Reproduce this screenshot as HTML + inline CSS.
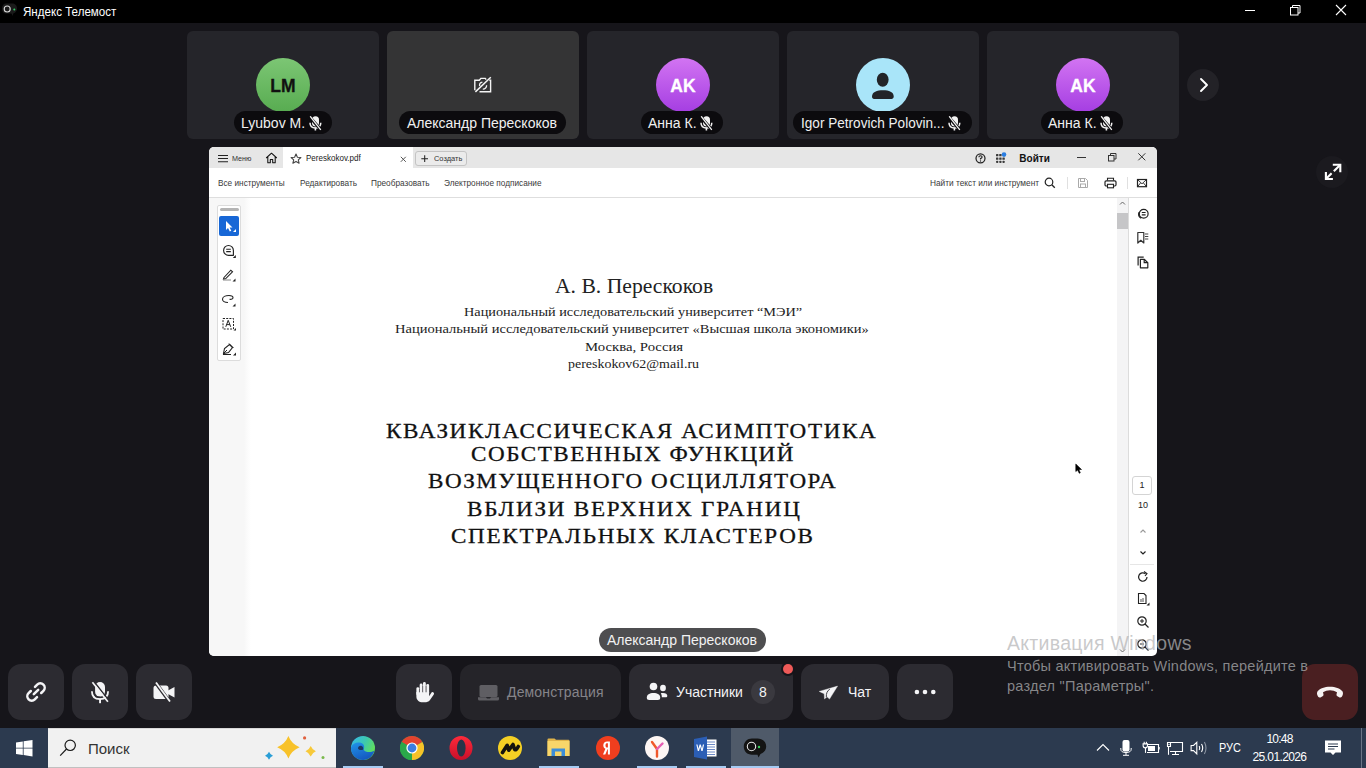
<!DOCTYPE html>
<html><head><meta charset="utf-8">
<style>
*{margin:0;padding:0;box-sizing:border-box}
html,body{width:1366px;height:768px;overflow:hidden;background:#16151a;font-family:"Liberation Sans",sans-serif;position:relative}
.a{position:absolute}
.t{position:absolute;white-space:nowrap;line-height:1}
/* title bar */
#tb{left:0;top:0;width:1366px;height:23px;background:#000}
/* tiles */
.tile{position:absolute;top:31px;width:192px;height:108px;background:#25252a;border-radius:6px}
.av{position:absolute;left:69px;top:26.5px;width:54px;height:54px;border-radius:50%;color:#fff;font-weight:bold;font-size:17.5px;text-align:center;line-height:56.5px;-webkit-text-stroke:0.3px currentColor}
.pill{position:absolute;top:80px;height:23px;border-radius:12px;background:#0c0b0e;color:#f0f0f0;font-size:14px;line-height:25px;white-space:nowrap}
.btn{position:absolute;top:664px;height:56px;background:#2c2b31;border-radius:13px}
.btxt{position:absolute;top:0;line-height:56px;font-size:15px;color:#f0f0f2;white-space:nowrap}
#tbar{left:0;top:728px;width:1366px;height:40px;background:#2c3a4f}
.ul{position:absolute;top:38px;height:2px;background:#a6cbf3}
</style></head><body>

<div id="tb" class="a">
  <svg class="a" style="left:0;top:0" width="22" height="22"><path d="M6 3.5H12C15 3.5 17 5.5 17 8.5C17 11 15.5 12.7 13.5 13.3L12.5 16L11.5 13.5H6C3.5 13.5 2 11.5 2 8.5C2 5.5 3.5 3.5 6 3.5Z" fill="#1a1a1a"/><circle cx="7.2" cy="9" r="3" fill="none" stroke="#d8d8d8" stroke-width="1.1"/><circle cx="14.3" cy="9.5" r="1" fill="#3c6"/></svg>
  <div class="t" style="left:23px;top:6px;font-size:12px;color:#fff;transform:scaleX(0.965);transform-origin:left">Яндекс Телемост</div>
  <div class="a" style="left:1245px;top:10px;width:10px;height:1px;background:#fff"></div>
  <svg class="a" style="left:1288px;top:3px" width="14" height="14"><rect x="2.5" y="4.5" width="7.5" height="7.5" fill="none" stroke="#fff"/><path d="M4.5 4.5V2.5H12V10H10" fill="none" stroke="#fff"/></svg>
  <svg class="a" style="left:1334px;top:3px" width="14" height="14"><path d="M2 2L12 12M12 2L2 12" stroke="#fff" stroke-width="1.1"/></svg>
</div>

<!-- tiles -->
<div class="tile" style="left:187px">
  <div class="av" style="background:linear-gradient(#7cc674,#58ac51);color:#111">LM</div>
  <div class="pill" style="left:47px;width:98px;padding-left:7px">Lyubov M.<svg class="a" style="left:75px;top:5px" width="13" height="15" viewBox="0 0 13 15"><rect x="3" y="0.3" width="7" height="10.2" rx="3.5" fill="#f2f2f2"/><path d="M1 6.8Q1 12 6.4 12Q11.8 12 11.8 6.8" fill="none" stroke="#f2f2f2" stroke-width="1.5"/><rect x="5.6" y="11.5" width="1.6" height="3" fill="#f2f2f2"/><path d="M0.6 0.8L12 14" stroke="#0c0b0e" stroke-width="3"/><path d="M1.2 0.3L11.8 13.8" stroke="#f2f2f2" stroke-width="1.3"/></svg></div>
</div>
<div class="tile" style="left:387px;background:#343435">
  <svg class="a" style="left:86px;top:45px" width="20" height="18" viewBox="0 0 20 18"><path d="M6.5 15.8H17.6V4.3H16.3M1.8 14.2V4.3H6.3L7.9 2.4H12.3L13.2 3.6" fill="none" stroke="#f4f4f4" stroke-width="1.4"/><path d="M6.6 10.2A3.5 3.5 0 0 1 9.4 6.2M13.6 9.2A3.6 3.6 0 0 1 9.8 13.1" fill="none" stroke="#f4f4f4" stroke-width="1.3"/><path d="M2.4 15.9L17.8 1.2" stroke="#f4f4f4" stroke-width="1.5"/></svg>
  <div class="pill" style="left:12px;width:167px;padding-left:8px">Александр Перескоков</div>
</div>
<div class="tile" style="left:587px">
  <div class="av" style="background:linear-gradient(#d274f2,#a53ee2)">AK</div>
  <div class="pill" style="left:54px;width:82px;padding-left:7px">Анна К.<svg class="a" style="left:59px;top:5px" width="13" height="15" viewBox="0 0 13 15"><rect x="3" y="0.3" width="7" height="10.2" rx="3.5" fill="#f2f2f2"/><path d="M1 6.8Q1 12 6.4 12Q11.8 12 11.8 6.8" fill="none" stroke="#f2f2f2" stroke-width="1.5"/><rect x="5.6" y="11.5" width="1.6" height="3" fill="#f2f2f2"/><path d="M0.6 0.8L12 14" stroke="#0c0b0e" stroke-width="3"/><path d="M1.2 0.3L11.8 13.8" stroke="#f2f2f2" stroke-width="1.3"/></svg></div>
</div>
<div class="tile" style="left:787px">
  <div class="av" style="background:#a9e5f9"><svg class="a" style="left:0;top:0" width="54" height="54"><ellipse cx="26.7" cy="21.8" rx="5.9" ry="7" fill="#222428"/><path d="M16 38.5C16 34 21 32.3 27 32.3S37.7 34 37.7 38.5C37.7 40.6 36.5 41 34 41H19.5C17 41 16 40.6 16 38.5Z" fill="#222428"/></svg></div>
  <div class="pill" style="left:6px;width:179px;padding-left:8px"><span style="display:inline-block;transform:scaleX(0.97);transform-origin:left">Igor Petrovich Polovin...</span><svg class="a" style="left:155px;top:5px" width="13" height="15" viewBox="0 0 13 15"><rect x="3" y="0.3" width="7" height="10.2" rx="3.5" fill="#f2f2f2"/><path d="M1 6.8Q1 12 6.4 12Q11.8 12 11.8 6.8" fill="none" stroke="#f2f2f2" stroke-width="1.5"/><rect x="5.6" y="11.5" width="1.6" height="3" fill="#f2f2f2"/><path d="M0.6 0.8L12 14" stroke="#0c0b0e" stroke-width="3"/><path d="M1.2 0.3L11.8 13.8" stroke="#f2f2f2" stroke-width="1.3"/></svg></div>
</div>
<div class="tile" style="left:987px">
  <div class="av" style="background:linear-gradient(#d274f2,#a53ee2)">AK</div>
  <div class="pill" style="left:54px;width:82px;padding-left:7px">Анна К.<svg class="a" style="left:59px;top:5px" width="13" height="15" viewBox="0 0 13 15"><rect x="3" y="0.3" width="7" height="10.2" rx="3.5" fill="#f2f2f2"/><path d="M1 6.8Q1 12 6.4 12Q11.8 12 11.8 6.8" fill="none" stroke="#f2f2f2" stroke-width="1.5"/><rect x="5.6" y="11.5" width="1.6" height="3" fill="#f2f2f2"/><path d="M0.6 0.8L12 14" stroke="#0c0b0e" stroke-width="3"/><path d="M1.2 0.3L11.8 13.8" stroke="#f2f2f2" stroke-width="1.3"/></svg></div>
</div>
<div class="a" style="left:1187px;top:69px;width:32px;height:32px;border-radius:50%;background:#232227"><svg class="a" style="left:0;top:0" width="32" height="32"><path d="M14 10L20 16L14 22" fill="none" stroke="#fff" stroke-width="1.9" stroke-linecap="round" stroke-linejoin="round"/></svg></div>

<div class="a" style="left:1316px;top:156px;width:32px;height:32px;border-radius:50%;background:#1b1a1f"></div>
<svg class="a" style="left:1316px;top:156px" width="32" height="32"><path d="M16.8 8.7H24.3V16.2" fill="none" stroke="#fff" stroke-width="2.1"/><path d="M23.8 9.2L17.8 15.2" stroke="#fff" stroke-width="2.1"/><path d="M16.9 23H9.9V16" fill="none" stroke="#fff" stroke-width="2.1"/><path d="M10.4 22.5L15.6 17.3" stroke="#fff" stroke-width="2.1"/></svg>
<!-- PDF window -->
<div class="a" id="pdf" style="left:209px;top:147px;width:948px;height:509px;background:#fff;border-radius:5px;overflow:hidden">
  <div class="a" style="left:0;top:0;width:948px;height:21px;background:#e6e6e6"></div>
  <div class="a" style="left:74px;top:0;width:130px;height:21px;background:#fff"></div>
  <div class="a" style="left:0;top:50px;width:948px;height:1px;background:#dedede"></div>
  <div class="a" style="left:0;top:51px;width:42px;height:458px;background:linear-gradient(90deg,#f7f7f7 0,#f7f7f7 35px,#fbfbfb 38px,#fff 42px)"></div>
  <div class="a" style="left:8px;top:58px;width:24px;height:156px;background:#fff;border:1px solid #dcdcdc;border-radius:2px"></div>
  <div class="a" style="left:11px;top:61px;width:19px;height:3px;background:#b4b4b4;border-radius:2px"></div>
  <div class="a" style="left:10px;top:69px;width:20px;height:20px;background:#1767d6;border-radius:2px"></div>
  <div class="a" style="left:908px;top:51px;width:11px;height:458px;background:#f4f4f5"></div>
  <div class="a" style="left:908px;top:66px;width:11px;height:16px;background:#c6c6c8"></div>
  <div class="a" style="left:919px;top:51px;width:1px;height:458px;background:#dcdcdc"></div>
</div>
<!-- tab bar -->
<svg class="a" style="left:217px;top:154px" width="12" height="9"><path d="M1 1.5H11M1 4.5H11M1 7.8H11" stroke="#222" stroke-width="1.1"/></svg>
<div class="t" style="left:232px;top:154.6px;font-size:8px;color:#333;transform:scaleX(0.9);transform-origin:left">Меню</div>
<svg class="a" style="left:265px;top:152px" width="13" height="12"><path d="M1.2 6L6.5 1.2L11.8 6M2.8 4.8V10.8H5.3V7.5H7.7V10.8H10.2V4.8" fill="none" stroke="#111" stroke-width="1.05" stroke-linejoin="round"/></svg>
<svg class="a" style="left:290px;top:153px" width="12" height="11"><path d="M6 1L7.4 4.2L10.9 4.5L8.3 6.8L9.1 10.2L6 8.4L2.9 10.2L3.7 6.8L1.1 4.5L4.6 4.2Z" fill="none" stroke="#444" stroke-width="1.1" stroke-linejoin="round"/></svg>
<div class="t" style="left:306px;top:155.3px;font-size:8.2px;color:#222;transform:scaleX(0.98);transform-origin:left">Pereskokov.pdf</div>
<svg class="a" style="left:400px;top:156px" width="7" height="7"><path d="M0.8 0.8L5.8 5.8M5.8 0.8L0.8 5.8" stroke="#555" stroke-width="1"/></svg>
<div class="a" style="left:415px;top:151px;width:52px;height:15px;border:1px solid #c4c4c4;border-radius:3px;background:#ebebeb"></div>
<svg class="a" style="left:420.5px;top:155px" width="8" height="8"><path d="M3.7 0.3V7M0.3 3.7H7" stroke="#222" stroke-width="1.05"/></svg>
<div class="t" style="left:434px;top:155.2px;font-size:8px;color:#333;transform:scaleX(0.93);transform-origin:left">Создать</div>
<svg class="a" style="left:975px;top:153px" width="11" height="11"><circle cx="5.5" cy="5.3" r="4.5" fill="none" stroke="#222" stroke-width="1.25"/><path d="M3.9 4.2Q3.9 2.7 5.5 2.7Q7.1 2.7 7.1 4.1Q7.1 5.1 5.5 5.6V6.5" fill="none" stroke="#222" stroke-width="1.15"/><circle cx="5.5" cy="8" r="0.7" fill="#222"/></svg>
<svg class="a" style="left:995px;top:152px" width="12" height="12"><g fill="#3a3a3a"><rect x="1" y="2" width="2.4" height="2.2" rx="0.5"/><rect x="4.2" y="2" width="2.4" height="2.2" rx="0.5"/><rect x="1" y="5.4" width="2.4" height="2.4" rx="0.5"/><rect x="4.2" y="5.4" width="2.4" height="2.4" rx="0.5"/><rect x="7.4" y="5.4" width="2.4" height="2.4" rx="0.5"/><rect x="1" y="8.7" width="2.4" height="2.4" rx="1"/><rect x="4.2" y="8.7" width="2.4" height="2.4" rx="1"/><rect x="7.4" y="8.7" width="2.4" height="2.4" rx="1"/></g><circle cx="9" cy="2.6" r="2.3" fill="#2a7de1"/></svg>
<div class="t" style="left:1019.3px;top:153.5px;font-size:10px;font-weight:bold;color:#111">Войти</div>
<div class="a" style="left:1077px;top:157px;width:9px;height:1px;background:#333"></div>
<svg class="a" style="left:1107px;top:152px" width="11" height="10"><rect x="1.5" y="3.5" width="5.5" height="5.5" fill="none" stroke="#333"/><path d="M3.5 3.5V1.5H9V7H7" fill="none" stroke="#333"/></svg>
<svg class="a" style="left:1137px;top:152px" width="10" height="10"><path d="M1.3 1.3L8.3 8.3M8.3 1.3L1.3 8.3" stroke="#333" stroke-width="1"/></svg>
<!-- toolbar -->
<div class="t" style="left:218px;top:178.8px;font-size:8.5px;color:#3a3a3a;transform:scaleX(0.97);transform-origin:left">Все инструменты</div>
<div class="t" style="left:300px;top:178.8px;font-size:8.5px;color:#3a3a3a;transform:scaleX(0.97);transform-origin:left">Редактировать</div>
<div class="t" style="left:371px;top:178.8px;font-size:8.5px;color:#3a3a3a;transform:scaleX(0.97);transform-origin:left">Преобразовать</div>
<div class="t" style="left:444px;top:178.8px;font-size:8.5px;color:#3a3a3a;transform:scaleX(0.97);transform-origin:left">Электронное подписание</div>
<div class="t" style="left:930px;top:178.8px;font-size:8.5px;color:#3a3a3a;transform:scaleX(0.975);transform-origin:left">Найти текст или инструмент</div>
<svg class="a" style="left:1044px;top:177px" width="12" height="12"><circle cx="5" cy="5" r="3.8" fill="none" stroke="#222" stroke-width="1.2"/><path d="M7.8 7.8L10.8 10.8" stroke="#222" stroke-width="1.3"/></svg>
<div class="a" style="left:1067px;top:177px;width:1px;height:12px;background:#e0e0e0"></div>
<svg class="a" style="left:1077px;top:177px" width="12" height="12"><path d="M1.5 1.5H8.5L10.5 3.5V10.5H1.5Z" fill="none" stroke="#aaa" stroke-width="1"/><rect x="3.5" y="1.5" width="4" height="3" fill="none" stroke="#aaa"/><rect x="3.5" y="7" width="5" height="3.5" fill="none" stroke="#aaa"/></svg>
<svg class="a" style="left:1104px;top:177px" width="13" height="12"><path d="M3.5 3.5V1.3H9.5V3.5" fill="none" stroke="#222" stroke-width="1.1"/><rect x="1" y="3.8" width="11" height="5.2" rx="1.2" fill="none" stroke="#222" stroke-width="1.2"/><rect x="3.5" y="7.3" width="6" height="3.5" fill="#fff" stroke="#222" stroke-width="1.1"/></svg>
<div class="a" style="left:1127px;top:177px;width:1px;height:12px;background:#e0e0e0"></div>
<svg class="a" style="left:1136px;top:178px" width="12" height="10"><rect x="1.5" y="1.5" width="9" height="7.2" fill="none" stroke="#222" stroke-width="1.2"/><path d="M1.5 1.5L6 5.8L10.5 1.5M1.5 8.7L4.5 5M10.5 8.7L7.5 5" fill="none" stroke="#222" stroke-width="0.9"/></svg>
<!-- left tools -->
<svg class="a" style="left:223px;top:219px" width="14" height="16"><path d="M3 2V11L5 9L6.8 12.5L8.3 11.8L6.6 8.4H9.5Z" fill="#fff"/><path d="M10 13L13 13L13 10Z" fill="#fff"/></svg>
<svg class="a" style="left:221px;top:243px" width="16" height="16"><path d="M7.5 12.3A4.9 4.9 0 1 1 12.4 7.4V12.3Z" fill="none" stroke="#222" stroke-width="1.15" stroke-linejoin="round"/><path d="M5.2 6.3H9.8M5.2 8.6H9.8" stroke="#222" stroke-width="1.05"/><path d="M11.8 15H14.8V12Z" fill="#222"/></svg>
<svg class="a" style="left:221px;top:267px" width="16" height="16"><path d="M3 10.5L9.8 3.2L11.5 4.8L4.5 11.8L2.5 12.3Z" fill="none" stroke="#222" stroke-width="1.1"/><path d="M2 13H10" stroke="#999" stroke-width="1.2"/><path d="M11.5 14.5H14.5V11.5Z" fill="#222"/></svg>
<svg class="a" style="left:221px;top:292px" width="16" height="16"><path d="M7 10.5C3.5 10.5 1.5 9 1.5 7.2C1.5 5 4.5 3.5 8 3.5C10.5 3.5 12 4.5 12 5.8C12 7 10.5 7.5 8.5 7.3" fill="none" stroke="#222" stroke-width="1.1"/><path d="M11.5 14.5H14.5V11.5Z" fill="#222"/></svg>
<svg class="a" style="left:221px;top:316px" width="16" height="16"><rect x="2" y="2.5" width="10.5" height="10.5" fill="none" stroke="#222" stroke-width="1" stroke-dasharray="2 1.2"/><path d="M4.8 10.8L7.2 4.3L9.7 10.8M5.6 8.6H8.9" fill="none" stroke="#222" stroke-width="1"/><path d="M12.5 14.5H15V12Z" fill="#222"/></svg>
<svg class="a" style="left:221px;top:341px" width="16" height="16"><path d="M2.5 12.5L3.5 7.5L8.5 3.5L11.5 6.5L7.5 11.5Z" fill="none" stroke="#222" stroke-width="1.1"/><path d="M8 2.5L12.5 7M2.5 12.5L6 9" fill="none" stroke="#222" stroke-width="1"/><path d="M2 13.5H10" stroke="#222" stroke-width="1"/><path d="M12 14.5H15V11.5Z" fill="#222"/></svg>
<!-- scrollbar & right panel -->
<svg class="a" style="left:1117px;top:199px" width="11" height="8"><path d="M3 5.5L5.5 3L8 5.5" fill="none" stroke="#666" stroke-width="1"/></svg>
<svg class="a" style="left:1117px;top:647px" width="11" height="8"><path d="M3 2.5L5.5 5L8 2.5" fill="none" stroke="#666" stroke-width="1"/></svg>
<svg class="a" style="left:1136px;top:206px" width="14" height="14"><circle cx="7.7" cy="7.8" r="4.4" fill="#fff" stroke="#222" stroke-width="1.2"/><path d="M5.8 6.5H9.6M5.8 8.9H9.6" stroke="#222" stroke-width="1.1"/><path d="M3 6.2A5 5 0 0 0 5.2 12.3" fill="none" stroke="#222" stroke-width="1.2"/></svg>
<svg class="a" style="left:1136px;top:230px" width="14" height="14"><path d="M1.8 2.5H7.8V13L4.8 10.3L1.8 13Z" fill="none" stroke="#333" stroke-width="1.2" stroke-linejoin="round"/><path d="M9 4H12.3M9 6.5H12.3M9 9H12.3" stroke="#444" stroke-width="1.1"/></svg>
<svg class="a" style="left:1136px;top:255px" width="14" height="14"><path d="M2.1 10.6V2.2H7.7" fill="none" stroke="#222" stroke-width="1.2"/><path d="M4.4 4.3H8.2L11.8 7.8V12.8H4.4Z" fill="#fff" stroke="#222" stroke-width="1.2" stroke-linejoin="round"/><path d="M8.2 4.3V7.6H11.6" fill="none" stroke="#222" stroke-width="1.2"/></svg>
<div class="a" style="left:1132px;top:476px;width:20px;height:19px;border:1px solid #d4d4d4;border-radius:3px;background:#fff"></div>
<div class="t" style="left:1132px;top:481px;width:20px;text-align:center;font-size:9px;color:#222">1</div>
<div class="t" style="left:1133px;top:501px;width:20px;text-align:center;font-size:9px;color:#222">10</div>
<svg class="a" style="left:1137px;top:527px" width="12" height="8"><path d="M3.5 5.5L6 3L8.5 5.5" fill="none" stroke="#999" stroke-width="1.1"/></svg>
<svg class="a" style="left:1137px;top:549px" width="12" height="8"><path d="M3.5 2.5L6 5L8.5 2.5" fill="none" stroke="#222" stroke-width="1.2"/></svg>
<div class="a" style="left:1130px;top:564px;width:24px;height:1px;background:#e6e6e6"></div>
<svg class="a" style="left:1136px;top:570px" width="14" height="14"><path d="M11 7A4.2 4.2 0 1 1 9.5 3.8" fill="none" stroke="#222" stroke-width="1.2"/><path d="M8 1.5L11 3.5L9 6" fill="none" stroke="#222" stroke-width="1.1"/></svg>
<svg class="a" style="left:1136px;top:592px" width="14" height="14"><path d="M2.5 1.5H8L10 3.5V11.5H2.5Z" fill="none" stroke="#222" stroke-width="1.1"/><path d="M5 7V10M7 6V10" stroke="#222" stroke-width="0.8"/><path d="M10.5 13.5H13.5V10.5Z" fill="#222"/></svg>
<svg class="a" style="left:1136px;top:615px" width="14" height="14"><circle cx="6" cy="6" r="4.2" fill="none" stroke="#222" stroke-width="1.2"/><path d="M4 6H8M6 4V8" stroke="#222"/><path d="M9 9L12.5 12.5" stroke="#222" stroke-width="1.3"/></svg>
<svg class="a" style="left:1136px;top:638px" width="14" height="14"><circle cx="6" cy="6" r="4.2" fill="none" stroke="#222" stroke-width="1.2"/><path d="M4 6H8" stroke="#222"/><path d="M9 9L12.5 12.5" stroke="#222" stroke-width="1.3"/></svg>
<!-- document -->
<div class="t" style="left:554.5px;top:276px;font-size:21px;font-family:'Liberation Serif',serif;color:#222;transform:scaleX(1.03);transform-origin:left">А. В. Перескоков</div>
<div class="t" style="left:464px;top:304.9px;font-size:13px;font-family:'Liberation Serif',serif;color:#222;transform:scaleX(1.098);transform-origin:left">Национальный исследовательский университет “МЭИ”</div>
<div class="t" style="left:395.3px;top:322.1px;font-size:13px;font-family:'Liberation Serif',serif;color:#222;transform:scaleX(1.115);transform-origin:left">Национальный исследовательский университет «Высшая школа экономики»</div>
<div class="t" style="left:584.5px;top:340px;font-size:13px;font-family:'Liberation Serif',serif;color:#222;transform:scaleX(1.133);transform-origin:left">Москва, Россия</div>
<div class="t" style="left:567.7px;top:357.1px;font-size:13px;font-family:'Liberation Serif',serif;color:#222;transform:scaleX(1.073);transform-origin:left">pereskokov62@mail.ru</div>
<div class="t" style="left:386.4px;top:420.6px;font-size:21px;font-family:'Liberation Serif',serif;color:#111;letter-spacing:1.49px;-webkit-text-stroke:0.3px #111;transform:scaleX(1.1);transform-origin:left">КВАЗИКЛАССИЧЕСКАЯ АСИМПТОТИКА</div>
<div class="t" style="left:471.4px;top:443.7px;font-size:21px;font-family:'Liberation Serif',serif;color:#111;letter-spacing:1.38px;-webkit-text-stroke:0.3px #111;transform:scaleX(1.1);transform-origin:left">СОБСТВЕННЫХ ФУНКЦИЙ</div>
<div class="t" style="left:428.4px;top:471.3px;font-size:21px;font-family:'Liberation Serif',serif;color:#111;letter-spacing:1.38px;-webkit-text-stroke:0.3px #111;transform:scaleX(1.1);transform-origin:left">ВОЗМУЩЕННОГО ОСЦИЛЛЯТОРА</div>
<div class="t" style="left:466.5px;top:498.9px;font-size:21px;font-family:'Liberation Serif',serif;color:#111;letter-spacing:1.6px;-webkit-text-stroke:0.3px #111;transform:scaleX(1.1);transform-origin:left">ВБЛИЗИ ВЕРХНИХ ГРАНИЦ</div>
<div class="t" style="left:451.3px;top:525.9px;font-size:21px;font-family:'Liberation Serif',serif;color:#111;letter-spacing:1.56px;-webkit-text-stroke:0.3px #111;transform:scaleX(1.1);transform-origin:left">СПЕКТРАЛЬНЫХ КЛАСТЕРОВ</div>
<!-- presenter label -->
<div class="a" style="left:599px;top:628px;width:167px;height:23.5px;border-radius:12px;background:#4e4e50"></div>
<div class="t" style="left:607px;top:633px;font-size:14px;color:#f2f2f2">Александр Перескоков</div>
<!-- cursor -->
<svg class="a" style="left:1075px;top:463px" width="9" height="12"><path d="M0.8 1V8.5L2.6 7L4.3 10.3L5.3 9.8L3.8 6.5H6.5Z" fill="#000" stroke="#000" stroke-width="0.6" stroke-linejoin="round"/></svg>

<!-- bottom controls -->
<div class="btn" style="left:8px;width:56px"></div>
<svg class="a" style="left:25px;top:681px" width="22" height="22" viewBox="0 0 22 22"><path d="M8.8 13.2L13.2 8.8" stroke="#f4f4f6" stroke-width="2.5" stroke-linecap="round"/><path d="M10 5.8L12.2 3.6A3.6 3.6 0 0 1 18.4 9.8L16.2 12M12 16.2L9.8 18.4A3.6 3.6 0 0 1 3.6 12.2L5.8 10" fill="none" stroke="#f4f4f6" stroke-width="2.5" stroke-linecap="round"/></svg>
<div class="btn" style="left:72px;width:56px"></div>
<svg class="a" style="left:90px;top:681px" width="21" height="24" viewBox="0 0 21 24"><rect x="5.1" y="1" width="9.9" height="14.6" rx="4.95" fill="#f4f4f6"/><path d="M1.9 10.3Q1.9 18.1 10 18.1Q18.1 18.1 18.1 10.3" fill="none" stroke="#f4f4f6" stroke-width="1.8"/><rect x="9.1" y="17.5" width="1.9" height="4.7" fill="#f4f4f6"/><path d="M5 15.5Q6 16.3 10 16.3" fill="none" stroke="#2c2b31" stroke-width="1"/><path d="M3.9 0.5L19.2 19.9" stroke="#2c2b31" stroke-width="1.5"/><path d="M2.4 1.2L17.9 20.7" stroke="#f4f4f6" stroke-width="1.7"/></svg>
<div class="btn" style="left:136px;width:56px"></div>
<svg class="a" style="left:153px;top:682px" width="23" height="20" viewBox="0 0 23 20"><rect x="0.5" y="3.5" width="15" height="13.5" rx="2.5" fill="#f4f4f6"/><path d="M15 8.5L21.5 5V15.5L15 12Z" fill="#f4f4f6"/><path d="M2.5 0.5L16.5 19.5" stroke="#2b2a2f" stroke-width="3.5"/><path d="M3 0.5L17 19.5" stroke="#f4f4f6" stroke-width="1.8"/></svg>
<div class="btn" style="left:396px;width:56px"></div>
<svg class="a" style="left:415px;top:681px" width="20" height="22" viewBox="0 0 20 22"><path d="M2.8 7.6V13M6.1 3.9V11M9.4 2.4V11M12.7 4.3V12" stroke="#f4f4f6" stroke-width="2.85" stroke-linecap="round"/><path d="M1.37 11H14.1V15.3L16.2 11.9A1.5 1.5 0 0 1 18.8 13.4L14.8 19.2C13.6 20.7 11.9 21.3 9.5 21.3H7.8C4 21.3 1.37 19 1.37 15.5Z" fill="#f4f4f6"/><path d="M4.45 8V11.5M7.75 5V11.5M11.05 5V11.5" stroke="#2c2b31" stroke-width="0.45"/></svg>
<div class="btn" style="left:460px;width:161px;background:#252429"></div>
<svg class="a" style="left:478px;top:684px" width="21" height="17" viewBox="0 0 21 17"><rect x="1.5" y="1" width="18" height="12" rx="1.5" fill="#5f5e63"/><path d="M0 13.2H8L9 14.6H12L13 13.2H21V15A1.5 1.5 0 0 1 19.5 16.5H1.5A1.5 1.5 0 0 1 0 15Z" fill="#5f5e63"/></svg>
<div class="t" style="left:507px;top:685.1px;font-size:14px;letter-spacing:0.15px;color:#858489">Демонстрация</div>
<div class="btn" style="left:629px;width:164px"></div>
<svg class="a" style="left:646px;top:682px" width="22" height="19" viewBox="0 0 22 19"><circle cx="7.5" cy="4.5" r="3.8" fill="#f4f4f6"/><path d="M0.8 15.5C0.8 12.5 3.5 11 7.5 11S14.2 12.5 14.2 15.5C14.2 17.3 13.5 18 11.8 18H3.2C1.5 18 0.8 17.3 0.8 15.5Z" fill="#f4f4f6"/><ellipse cx="17" cy="6" rx="2.9" ry="3.3" fill="#f4f4f6"/><path d="M14.8 11.2C15.5 11 16.2 10.9 17 10.9C19.8 10.9 21.3 12 21.3 13.8C21.3 15 20.8 15.3 19.5 15.3H15.8C15.9 13.8 15.6 12.3 14.8 11.2Z" fill="#f4f4f6"/></svg>
<div class="t" style="left:676px;top:685.1px;font-size:14px;color:#f4f4f6">Участники</div>
<div class="a" style="left:751px;top:680px;width:24px;height:24px;border-radius:50%;background:#3a393f"></div>
<div class="t" style="left:751px;top:685.1px;width:24px;text-align:center;font-size:14px;color:#f4f4f6">8</div>
<div class="a" style="left:781px;top:662px;width:14px;height:14px;border-radius:50%;background:#16151a"></div>
<div class="a" style="left:783px;top:664px;width:10px;height:10px;border-radius:50%;background:#ee5a58"></div>
<div class="btn" style="left:801px;width:88px"></div>
<svg class="a" style="left:818px;top:685px" width="21" height="15" viewBox="0 0 21 15"><path d="M1.2 6.4L19.6 1.1L11.5 14.1L9 11.8L6.5 13.9L6.2 8.8Z" fill="#f4f4f6" stroke="#f4f4f6" stroke-width="0.4" stroke-linejoin="round"/><path d="M11.8 4.2Q8 6.5 8.3 12.2" fill="none" stroke="#2c2b31" stroke-width="0.9"/></svg>
<div class="t" style="left:848px;top:685.1px;font-size:14px;color:#f4f4f6">Чат</div>
<div class="btn" style="left:897px;width:56px"></div>
<svg class="a" style="left:910px;top:688px" width="30" height="8"><circle cx="6.9" cy="4" r="2.3" fill="#f4f4f6"/><circle cx="15" cy="4" r="2.3" fill="#f4f4f6"/><circle cx="23.3" cy="4" r="2.3" fill="#f4f4f6"/></svg>
<div class="btn" style="left:1302px;width:56px;background:#4a1f21"></div>
<svg class="a" style="left:1316px;top:684px" width="28" height="16" viewBox="0 0 28 16"><path d="M14 2.7C19.5 2.7 24 4.5 26.2 7C27.2 8.2 27.2 10 26.5 11.5L25.8 12.8C25.3 13.6 24.3 13.8 23.5 13.4L21.5 12.3C20.6 11.8 20.3 10.8 20.6 9.9L21 8.3C19 7 16.5 6.3 14 6.3C11.5 6.3 9 7 7 8.3L7.4 9.9C7.7 10.8 7.4 11.8 6.5 12.3L4.5 13.4C3.7 13.8 2.7 13.6 2.2 12.8L1.5 11.5C0.8 10 0.8 8.2 1.8 7C4 4.5 8.5 2.7 14 2.7Z" fill="#f6f2f2"/></svg>

<!-- activation watermark -->
<div class="t" style="left:1007px;top:634.2px;font-size:19.5px;letter-spacing:0.3px;color:rgba(180,180,182,0.72)">Активация Windows</div>
<div class="t" style="left:1007px;top:658.8px;font-size:14.5px;letter-spacing:0.25px;color:rgba(180,180,182,0.72)">Чтобы активировать Windows, перейдите в</div>
<div class="t" style="left:1007px;top:678.8px;font-size:14.5px;letter-spacing:0.25px;color:rgba(180,180,182,0.72)">раздел "Параметры".</div>

<!-- taskbar -->
<div id="tbar" class="a">
  <svg class="a" style="left:16px;top:12px" width="17" height="17" viewBox="0 0 17 17"><path d="M0 2.4L6.8 1.4V7.8H0ZM7.6 1.3L16.5 0V7.8H7.6ZM0 8.6H6.8V15L0 14ZM7.6 8.6H16.5V16.4L7.6 15.1Z" fill="#fff"/></svg>
  <div class="a" style="left:48px;top:0;width:288px;height:40px;background:#f1f1f1;border-top:1px solid #d8d8d8;border-bottom:1px solid #c0c0c0"></div>
  <svg class="a" style="left:59px;top:11px" width="18" height="18" viewBox="0 0 18 18"><circle cx="11.2" cy="6.3" r="5.2" fill="none" stroke="#1a1a1a" stroke-width="1.2"/><path d="M7.5 10L1.2 16.6" stroke="#1a1a1a" stroke-width="1.2"/></svg>
  <div class="t" style="left:88px;top:13.2px;font-size:15px;color:#333">Поиск</div>
  <svg class="a" style="left:250px;top:0px" width="86" height="40"><path d="M38.4 8.0Q41.6 16.0 49.599999999999994 19.2Q41.6 22.4 38.4 30.4Q35.199999999999996 22.4 27.2 19.2Q35.199999999999996 16.0 38.4 8.0Z" fill="#f8c22a"/><path d="M60.7 18.1Q62.2 21.8 65.9 23.3Q62.2 24.8 60.7 28.5Q59.2 24.8 55.5 23.3Q59.2 21.8 60.7 18.1Z" fill="#f7c93a"/><path d="M19 23.7Q20.2 26.5 23 27.7Q20.2 28.9 19 31.7Q17.8 28.9 15 27.7Q17.8 26.5 19 23.7Z" fill="#2a9ed6"/><circle cx="54.6" cy="9.9" r="1.6" fill="#e0603e"/><circle cx="73" cy="29.6" r="1.5" fill="#7ab94c"/></svg>

  <div class="a" style="left:731px;top:0;width:48px;height:40px;background:#4f5a69"></div>
  <div class="ul" style="left:343px;width:40px"></div>
  <div class="ul" style="left:539px;width:40px"></div>
  <div class="ul" style="left:637px;width:40px"></div>
  <div class="ul" style="left:686px;width:40px"></div>
  <div class="ul" style="left:731px;width:48px"></div>

  <!-- edge -->
  <svg class="a" style="left:351px;top:8px" width="24" height="24" viewBox="0 0 24 24"><defs><linearGradient id="eg1" x1="0" y1="0" x2="1" y2="0.5"><stop offset="0" stop-color="#35b8f0"/><stop offset="0.55" stop-color="#3dc8b0"/><stop offset="1" stop-color="#62e05a"/></linearGradient><linearGradient id="eg2" x1="0" y1="0" x2="0.5" y2="1"><stop offset="0" stop-color="#2196ea"/><stop offset="1" stop-color="#1559c0"/></linearGradient></defs><circle cx="12" cy="12" r="12" fill="url(#eg1)"/><path d="M0.2 11C1.5 7.5 5 6 8.5 6.5C12.5 7 14 10 12.8 12.8C12.3 14.3 13.8 15.8 16.5 16C19 16.2 21.5 15.8 23.3 14.8C22 20.3 17.5 24 12 24C5.4 24 0 18.6 0 12Z" fill="url(#eg2)"/><path d="M7 12.5C7 10.5 9 9.5 10.5 10C12 10.5 12.5 12 12.2 13.5C10.5 14.5 8 14.3 7 12.5Z" fill="#1d3760"/></svg>
  <!-- chrome -->
  <svg class="a" style="left:400px;top:8px" width="24" height="24" viewBox="0 0 24 24"><circle cx="12" cy="12" r="12" fill="#2aa84a"/><path d="M12 12L22.4 6A12 12 0 0 0 1.6 6Z" fill="#e3432f"/><path d="M12 12L22.4 6A12 12 0 0 1 12 24Z" fill="#f6c228"/><path d="M12 12L1.6 6L1.6 6A12 12 0 0 0 12 24L12 12Z" fill="#2aa84a"/><circle cx="12" cy="12" r="5.6" fill="#fff"/><circle cx="12" cy="12" r="4.4" fill="#3c7ee0"/></svg>
  <!-- opera -->
  <svg class="a" style="left:449px;top:8px" width="24" height="24" viewBox="0 0 24 24"><defs><linearGradient id="og" x1="0" y1="0" x2="0" y2="1"><stop offset="0" stop-color="#ff2a3a"/><stop offset="1" stop-color="#c8102a"/></linearGradient></defs><ellipse cx="12" cy="12" rx="11.5" ry="12" fill="url(#og)"/><ellipse cx="12.3" cy="12" rx="4.3" ry="8.6" fill="#283549"/></svg>
  <!-- yandex music -->
  <svg class="a" style="left:498px;top:8px" width="24" height="24" viewBox="0 0 24 24"><circle cx="12" cy="12" r="12" fill="#f5d024"/><path d="M4.5 16.5L9.2 9.3L10.8 14.2L15 8.5L16.5 13Q17.8 15.2 20.3 10.5" fill="none" stroke="#15140e" stroke-width="3.6" stroke-linejoin="round" stroke-linecap="round"/></svg>
  <!-- explorer -->
  <svg class="a" style="left:547px;top:10px" width="23" height="19" viewBox="0 0 23 19"><path d="M0.5 1.5A1 1 0 0 1 1.5 0.5H7.5L9 1.8H21.5A1 1 0 0 1 22.5 2.8V18H0.5Z" fill="#e0b44a"/><rect x="0.5" y="3" width="22" height="15" fill="#f8d66a"/><path d="M4.5 18V10.5H18V18H14.5V13.5H8V18Z" fill="#3d8ed8"/></svg>
  <!-- yandex -->
  <svg class="a" style="left:596px;top:8px" width="24" height="24" viewBox="0 0 24 24"><circle cx="12" cy="12" r="12" fill="#f03e1e"/><path d="M13.5 5.5H11.2C8.8 5.5 7.3 6.9 7.3 9.2C7.3 11 8.1 12 9.4 12.7L7 18.5H9.3L11.5 13.3H11.9V18.5H13.9V5.5ZM11.9 11.6H11.3C10 11.6 9.5 10.8 9.5 9.3C9.5 7.8 10.2 7.2 11.3 7.2H11.9Z" fill="#fff"/></svg>
  <!-- y browser -->
  <svg class="a" style="left:645px;top:8px" width="24" height="24" viewBox="0 0 24 24"><circle cx="12" cy="12" r="12" fill="#fdf6f4"/><path d="M7 6L12 13V20.5" fill="none" stroke="#f0582a" stroke-width="2.4" stroke-linecap="round"/><path d="M17.5 7.5L12 13" fill="none" stroke="#e55fb3" stroke-width="2.4" stroke-linecap="round"/></svg>
  <!-- word -->
  <svg class="a" style="left:694px;top:8px" width="23" height="24" viewBox="0 0 23 24"><rect x="10" y="3.5" width="12.5" height="17" fill="#fff"/><path d="M12 6H21M12 8.5H21M12 11H21M12 13.5H21M12 16H21M12 18.5H21" stroke="#5a7cc0" stroke-width="0.9"/><path d="M0 3L13 0.5V23.5L0 21Z" fill="#2b5eb5"/><path d="M2.3 8.5L3.8 15H5L6.2 10.8L7.4 15H8.6L10.1 8.5H8.9L8 12.8L6.8 8.5H5.6L4.4 12.8L3.5 8.5Z" fill="#fff"/></svg>
  <!-- telemost -->
  <svg class="a" style="left:743px;top:10px" width="24" height="20" viewBox="0 0 24 20"><path d="M9 0.5H14.5C19.5 0.5 23.2 4 23.2 8.5C23.2 12 21 14.8 17.5 16L15.5 19.5L14.5 16.8H9C4.2 16.8 0.8 13.5 0.8 8.6C0.8 3.8 4.2 0.5 9 0.5Z" fill="#141414"/><circle cx="8.5" cy="8.5" r="4.2" fill="none" stroke="#e8e8e8" stroke-width="1.1"/><circle cx="16" cy="9" r="1.2" fill="#37d25c"/></svg>

  <!-- tray -->
  <svg class="a" style="left:1096px;top:15px" width="14" height="9"><path d="M1 7.5L7 1.5L13 7.5" fill="none" stroke="#fff" stroke-width="1.1"/></svg>
  <svg class="a" style="left:1120px;top:12px" width="12" height="17"><rect x="2.5" y="0" width="7" height="11.5" rx="2" fill="#fff"/><path d="M0.8 8V9.2Q0.8 12.5 6 12.5Q11.2 12.5 11.2 9.2V8" fill="none" stroke="#fff" stroke-width="1"/><path d="M6 12.5V15M3 15.3H9" stroke="#fff" stroke-width="1"/></svg>
  <svg class="a" style="left:1138px;top:8px" width="74" height="24" viewBox="0 0 74 24"><g fill="none" stroke="#fff" stroke-width="1.1"><path d="M6.2 5.8V8M8.4 5.8V8"/><path d="M5.1 7.9H9.5V9.6Q9.5 11.9 7.3 11.9Q5.1 11.9 5.1 9.6Z"/><path d="M7.5 11.9V16.9"/><path d="M9 8.5H20.5V16.5H9"/><path d="M29.5 6.5H44.5V15.5H32"/><path d="M29.5 6.5H32.5V10.5H29.5Z"/><path d="M30.2 7.9L31 8.8L31.9 7.9" stroke-width="0.8"/><path d="M30.5 10.5V18.8"/><path d="M37.5 15.5V18.5M34 18.5H41"/><path d="M53.1 9.5H55.5L58.8 6.3V17.9L55.5 14.6H53.1Z"/><path d="M61.2 10Q62.3 12 61.2 14M63.5 8Q65.9 12 63.5 16"/><path d="M66.4 6Q69.6 12 66.4 18" stroke="#8b94a2"/></g><rect x="10" y="10" width="7" height="5" fill="#fff"/><rect x="20.5" y="11" width="1.2" height="2.5" fill="#fff"/></svg>
  <div class="t" style="left:1218.5px;top:14.4px;font-size:12px;color:#fff;transform:scaleX(0.91);transform-origin:left">РУС</div>
  <div class="t" style="left:1266.5px;top:5px;font-size:12px;letter-spacing:-0.8px;color:#fff">10:48</div>
  <div class="t" style="left:1252.5px;top:23px;font-size:12px;letter-spacing:-0.62px;color:#fff">25.01.2026</div>
  <svg class="a" style="left:1324px;top:11px" width="18" height="18"><path d="M1 1.5H17V13.5H11.5L9 16L6.5 13.5H1Z" fill="#fff"/><path d="M4 5H14M4 7.5H14M4 10H10.5" stroke="#2c3a4f" stroke-width="1"/></svg>
  <div class="a" style="left:1361px;top:0;width:1px;height:40px;background:#6a7586"></div>
</div>
</body></html>
